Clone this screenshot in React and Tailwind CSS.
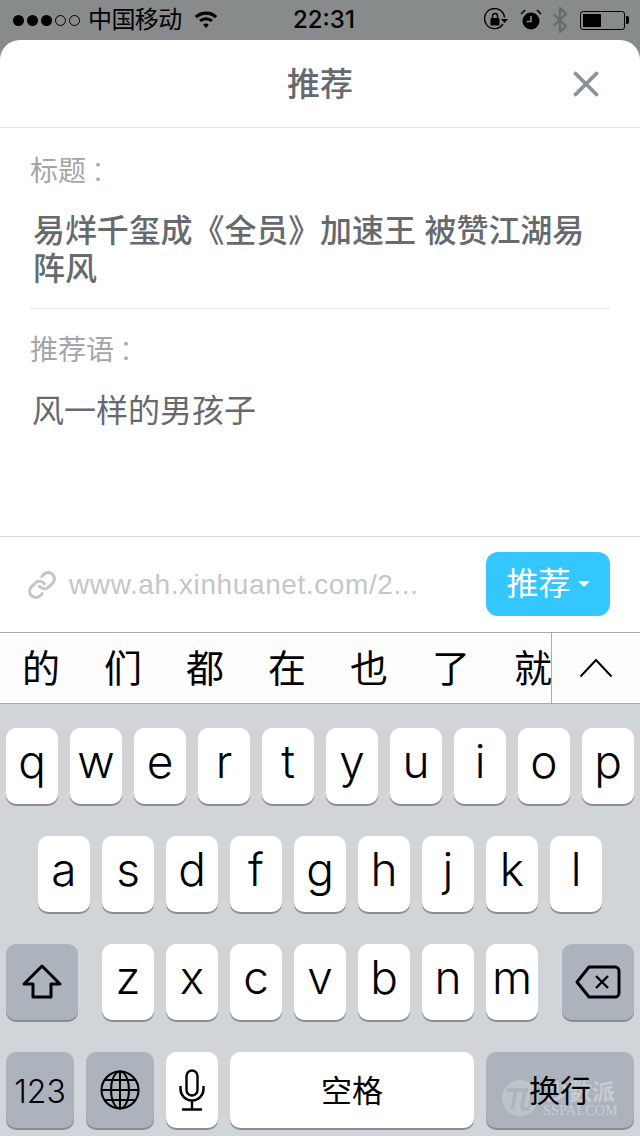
import { Link as LinkIcon, X } from 'lucide-react';

const cjk = 'font-["Liberation_Sans","Noto_Sans_CJK_SC",sans-serif]';
const candidates = ['的', '们', '都', '在', '也', '了', '就'];
const row1 = ['q', 'w', 'e', 'r', 't', 'y', 'u', 'i', 'o', 'p'];
const row2 = ['a', 's', 'd', 'f', 'g', 'h', 'j', 'k', 'l'];
const row3 = ['z', 'x', 'c', 'v', 'b', 'n', 'm'];

// Single keyboard key, dark = grey function key
function Key({ className = '', dark = false, children }) {
  return (
    <div
      className={`h-[76px] rounded-[10px] flex items-center justify-center text-black shadow-[0_2px_0_#8a8d92] ${
        dark ? 'bg-[#adb3bc]' : 'bg-white'
      } ${className}`}
    >
      {children}
    </div>
  );
}

function LetterKey({ letter }) {
  return (
    <Key className="w-[52px]">
      <span className='font-["Inter",sans-serif] text-[46px] font-light leading-none -mt-[10px]'>{letter}</span>
    </Key>
  );
}

function StatusBar() {
  return (
    <div className={`h-10 bg-[#888b8b] flex items-center relative text-black ${cjk}`}>
      <div className="flex items-center gap-[3px] ml-[13px]">
        {[0, 1, 2].map((i) => (
          <span key={i} className="w-[11px] h-[11px] rounded-full bg-black" />
        ))}
        {[0, 1].map((i) => (
          <span key={i} className="w-[11px] h-[11px] rounded-full border border-black" />
        ))}
      </div>
      <span className="ml-[8px] text-[24px] leading-none tracking-[-0.6px]">中国移动</span>
      <svg className="ml-[12px]" width="24" height="20" viewBox="0 0 26 20">
        <path d="M2 7 A16 16 0 0 1 24 7" fill="none" stroke="#000" strokeWidth="3.4" />
        <path d="M6.5 11 A10 10 0 0 1 19.5 11" fill="none" stroke="#000" strokeWidth="3.4" />
        <path d="M10 15 L13 19 L16 15 A5 5 0 0 0 10 15 Z" fill="#000" />
      </svg>
      <span className='absolute left-[293px] top-[6px] font-["Inter",sans-serif] text-[24px] leading-7 font-medium'>22:31</span>
      <div className="ml-auto mr-[11px] flex items-center">
        <svg width="24" height="24" viewBox="0 0 24 24">
          <path d="M19 16 A10 10 0 1 1 20.5 9.5" fill="none" stroke="#000" strokeWidth="1.4" />
          <path d="M17 11 H24 L20.5 15 Z" fill="#000" />
          <rect x="6.5" y="10" width="9" height="7.5" rx="1" fill="#000" />
          <path d="M8.5 10 V8 A2.5 2.5 0 0 1 13.5 8 V10" fill="none" stroke="#000" strokeWidth="1.5" />
        </svg>
        <svg className="ml-[12px]" width="22" height="24" viewBox="0 0 22 24">
          <circle cx="11" cy="13" r="8.5" fill="#000" />
          <path d="M11 8 V13.5 H6.5" fill="none" stroke="#888b8b" strokeWidth="1.6" />
          <path d="M1 6 L5 2 M21 6 L17 2" stroke="#000" strokeWidth="1.6" />
        </svg>
        <svg className="ml-[10px]" width="16" height="26" viewBox="0 0 16 26">
          <path d="M2 7.5 L14 19 L8 25 V1 L14 7 L2 18.5" fill="none" stroke="#666a6a" strokeWidth="2.2" />
        </svg>
        <div className="ml-[12px] w-[45px] h-[19px] rounded-[3px] border border-black p-[2px]">
          <div className="w-[18px] h-full bg-black" />
        </div>
        <div className="w-[3px] h-[8px] bg-black ml-[1px] rounded-r-[2px]" />
      </div>
    </div>
  );
}

function Sheet() {
  return (
    <div className={`bg-[#888b8b] ${cjk}`}>
      <div className="bg-white rounded-t-[20px] h-[592px] flex flex-col">
        <div className="h-[88px] shrink-0 border-b border-[#e4e4e4] flex items-center justify-center relative">
          <span className="text-[33px] font-medium text-[#666a6e] leading-none mt-[2px]">推荐</span>
          <X className="absolute right-[33px] top-[23px] text-[#8b929a]" size={42} strokeWidth={2.2} />
        </div>

        <div className="px-[30px] grow">
          <p className="mt-[24px] text-[28px] leading-10 text-[#a3a6a9]">
            标题<span className="ml-[5px] font-light">：</span>
          </p>
          <p className="mt-[20px] pl-[3px] text-[32px] leading-[38px] font-medium tracking-[-0.1px] text-[#666a6e]">
            易烊千玺成《全员》加速王 被赞江湖易阵风
          </p>
          <div className="mt-[20px] h-px bg-[#e4e4e4]" />
          <p className="mt-[22px] text-[28px] leading-10 text-[#a3a6a9]">
            推荐语<span className="ml-[5px] font-light">：</span>
          </p>
          <p className="mt-[20px] pl-[2px] text-[32px] leading-10 text-[#666a6e]">风一样的男孩子</p>
        </div>

        <div className="h-[96px] shrink-0 border-t border-[#dcdcdc] flex items-center pl-[27px] pr-[30px]">
          <LinkIcon className="text-[#c4c6c8]" size={30} strokeWidth={2.4} />
          <span className="ml-[12px] text-[28px] tracking-[0.6px] text-[#c4c6c8] leading-none">www.ah.xinhuanet.com/2...</span>
          <button className="ml-auto -mt-px w-[124px] h-16 rounded-[12px] bg-[#33c7fd] text-white flex items-center justify-center gap-[7px]">
            <span className="text-[32px] leading-none">推荐</span>
            <span className="w-0 h-0 border-x-[6px] border-x-transparent border-t-[6px] border-t-white" />
          </button>
        </div>
      </div>
    </div>
  );
}

function Candidates() {
  return (
    <div className={`h-[72px] bg-[#fdfdfd] border-y border-[#a9adb3] flex ${cjk}`}>
      <div className="w-[551px] shrink-0 overflow-hidden flex">
        {candidates.map((c) => (
          <span key={c} className="w-[82px] shrink-0 text-center text-[38px] leading-[72px] text-black">
            {c}
          </span>
        ))}
      </div>
      <div className="grow border-l border-[#a9adb3] flex items-center justify-center">
        <svg width="34" height="20" viewBox="0 0 34 20">
          <path d="M1.5 18.5 L17 2 L32.5 18.5" fill="none" stroke="#000" strokeWidth="2" />
        </svg>
      </div>
    </div>
  );
}

function Keyboard() {
  return (
    <div className={`bg-[#d1d4d9] grow pt-6 flex flex-col gap-8 relative ${cjk}`}>
      <div className="flex justify-center gap-3">
        {row1.map((k) => <LetterKey key={k} letter={k} />)}
      </div>
      <div className="flex justify-center gap-3">
        {row2.map((k) => <LetterKey key={k} letter={k} />)}
      </div>
      <div className="flex px-[6px]">
        <Key dark className="w-[72px]">
          <svg width="40" height="36" viewBox="0 0 40 36">
            <path d="M20 2 L38 20 H29 V33 H11 V20 H2 Z" fill="none" stroke="#000" strokeWidth="3" strokeLinejoin="round" />
          </svg>
        </Key>
        <div className="flex gap-3 ml-6">
          {row3.map((k) => <LetterKey key={k} letter={k} />)}
        </div>
        <Key dark className="w-[72px] ml-auto">
          <svg width="46" height="34" viewBox="0 0 46 34">
            <path d="M14 2 H40 A4 4 0 0 1 44 6 V28 A4 4 0 0 1 40 32 H14 L2 17 Z" fill="none" stroke="#000" strokeWidth="3" strokeLinejoin="round" />
            <path d="M21 11 L33 23 M33 11 L21 23" stroke="#000" strokeWidth="2.4" />
          </svg>
        </Key>
      </div>
      <div className="flex px-[6px] gap-3">
        <Key dark className="w-[68px]">
          <span className='font-["Inter",sans-serif] text-[32px] font-light mt-[4px]'>123</span>
        </Key>
        <Key dark className="w-[68px]">
          <svg width="40" height="40" viewBox="0 0 40 40" fill="none" stroke="#000" strokeWidth="2">
            <circle cx="20" cy="20" r="18.5" />
            <ellipse cx="20" cy="20" rx="9" ry="18.5" />
            <path d="M20 1.5 V38.5 M1.5 20 H38.5 M4.5 10 H35.5 M4.5 30 H35.5" />
          </svg>
        </Key>
        <Key className="w-[52px]">
          <svg width="26" height="42" viewBox="0 0 26 42" fill="none" stroke="#000" strokeWidth="2.4">
            <rect x="7.5" y="1.5" width="11" height="25" rx="5.5" />
            <path d="M1.5 17 V20 A11.5 11.5 0 0 0 24.5 20 V17 M13 32 V40 M3 40.5 H23" />
          </svg>
        </Key>
        <Key className="w-[244px]">
          <span className="text-[31px] leading-none mt-[3px]">空格</span>
        </Key>
        <Key dark className="w-[148px]">
          <span className="relative z-10 text-[31px] leading-none mt-[3px]">换行</span>
        </Key>
      </div>

      {/* watermark under the return key label */}
      <div className="absolute left-[501px] top-[375px] flex items-start opacity-70 pointer-events-none">
        <svg width="38" height="38" viewBox="0 0 38 38">
          <circle cx="19" cy="19" r="18" fill="#c6cad0" />
          <path d="M6 11 H27 M15 11 L11 30 M24 13 L21 26 Q20 30 25 30 H28 M32 11 L29 28" fill="none" stroke="#adb3bc" strokeWidth="3.4" />
        </svg>
        <div className="ml-[4px] flex flex-col items-center">
          <span className="text-[23px] leading-[26px] font-bold text-[#d4d7dc]">少数派</span>
          <span className='font-["Liberation_Serif",serif] text-[14px] leading-[12px] tracking-[0.3px] text-[#d4d7dc]'>SSPAI.COM</span>
        </div>
      </div>
    </div>
  );
}

export default function App() {
  return (
    <div className="w-[640px] h-[1136px] overflow-hidden flex flex-col">
      <StatusBar />
      <Sheet />
      <Candidates />
      <Keyboard />
    </div>
  );
}
